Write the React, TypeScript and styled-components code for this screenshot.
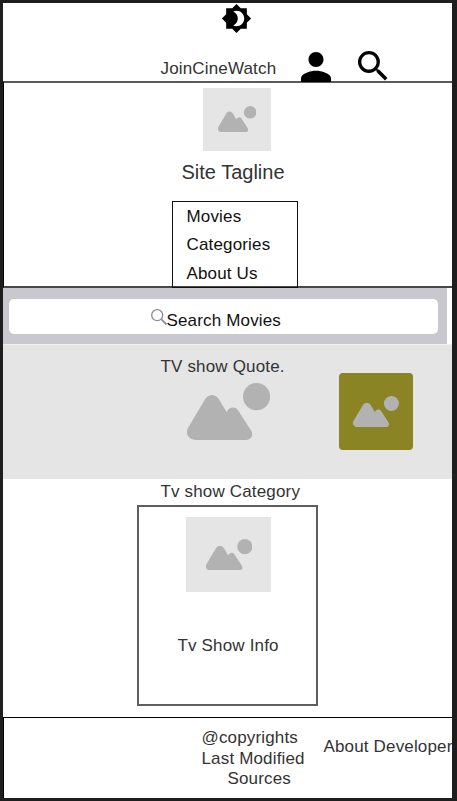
import React from "react";
import styled, { createGlobalStyle } from "styled-components";
import { MdBrightness4 } from "react-icons/md";

const GlobalStyle = createGlobalStyle`
  * { box-sizing: border-box; }
  body { margin: 0; background: #1e1e1e; }
`;

const Page = styled.div`
  width: 457px;
  height: 801px;
  padding: 3px 5px 3px 3px;
  background: #1e1e1e;
  font-family: "Liberation Sans", Arial, sans-serif;
  overflow: hidden;
`;

const Screen = styled.div`
  display: flex;
  flex-direction: column;
  width: 449px;
  height: 795px;
  background: #fff;
  overflow: hidden;
`;

const Text = styled.span<{ $tracking?: number; $size?: number; $color?: string }>`
  display: block;
  font-size: ${(p) => p.$size ?? 17}px;
  line-height: 20px;
  letter-spacing: ${(p) => p.$tracking ?? 0.16}px;
  text-indent: 0.5px;
  color: ${(p) => p.$color ?? "#333"};
  white-space: nowrap;
`;

const Header = styled.header`
  display: flex;
  flex-direction: column;
  flex: none;
  height: 78px;
`;

const ThemeToggle = styled.div`
  display: flex;
  flex: none;
  height: 31px;
  padding-left: 217.5px;
  color: #000;
`;

const HeaderRow = styled.div`
  display: flex;
  flex: none;
  align-items: flex-start;
  padding: 17px 0 0 157px;
`;

const Brand = styled(Text)`
  width: 141px;
  margin-top: 8px;
`;

const PersonIcon = styled.svg`
  flex: none;
  width: 30px;
  height: 30px;
  margin: 1px 27px 0 0;
  z-index: 1;
`;

const SearchIcon = styled.svg`
  flex: none;
  width: 29.5px;
  height: 29.5px;
`;

const Hero = styled.section`
  display: flex;
  flex-direction: column;
  align-items: flex-start;
  flex: none;
  height: 207px;
  border-top: 2px solid #5a5a5a;
  border-bottom: 2px solid #484848;
  border-left: 1px solid #000;
`;

const ImageBox = styled.div<{ $width: number; $height: number }>`
  display: flex;
  flex: none;
  width: ${(p) => p.$width}px;
  height: ${(p) => p.$height}px;
  background: #e5e5e5;
`;

const HeroImage = styled(ImageBox)`
  margin: 5px 0 0 198.5px;
  padding: 18px 0 0 15px;
`;

const Tagline = styled(Text)`
  margin: 11px 0 0 177px;
`;

const Menu = styled.nav`
  display: flex;
  flex-direction: column;
  flex: none;
  gap: 8.5px;
  width: 126px;
  height: 87px;
  margin: 19px 0 0 168px;
  padding: 5px 0 0 13px;
  border: 1px solid #111;
`;

const SearchBand = styled.div`
  flex: none;
  width: 444px;
  height: 56px;
  padding: 11px 9px 0 6px;
  background: #c9c8ce;
`;

const SearchField = styled.div`
  display: flex;
  height: 35px;
  padding: 10px 0 0 142px;
  border-radius: 5px;
  background: #fff;
`;

const FieldIcon = styled.svg`
  flex: none;
  width: 16px;
  height: 16px;
  margin-right: -1px;
`;

const FieldText = styled(Text)`
  margin-top: 2px;
`;

const Quote = styled.section`
  display: flex;
  flex: none;
  height: 135px;
  background: #e5e5e5;
  border-top: 1px solid #efefef;
`;

const QuoteMain = styled.div`
  width: 336px;
  padding: 12px 0 0 157px;
`;

const QuotePicture = styled.div`
  padding: 6px 0 0 26.5px;
`;

const OliveCard = styled.div`
  width: 74px;
  height: 77px;
  margin-top: 28px;
  padding: 23px 0 0 14px;
  border-radius: 4px;
  background: #8a8425;
`;

const Category = styled.section`
  flex: none;
  height: 238px;
  padding-top: 3px;
`;

const CategoryTitle = styled(Text)`
  margin-left: 157px;
`;

const ShowCard = styled.article`
  width: 181px;
  height: 201px;
  margin: 3px 0 0 134px;
  border: 2px solid #5e5e5e;
`;

const ShowImage = styled(ImageBox)`
  margin: 10px 0 0 47px;
  padding: 21.5px 0 0 19.5px;
`;

const ShowInfo = styled(Text)`
  margin: 44px 0 0 38px;
`;

const Footer = styled.footer`
  display: flex;
  flex: 1;
  border: 1px solid #000;
  border-right: 0;
  border-bottom: 0;
`;

const Credits = styled.div`
  flex: none;
  width: 319px;
  padding: 10px 0 0 197px;
`;

const CreditLine = styled(Text)<{ $indent?: number }>`
  height: 20.5px;
  padding-left: ${(p) => p.$indent ?? 0}px;
`;

const Developer = styled(Text)`
  margin-top: 19px;
`;

const Landscape = styled.svg<{ $width: number }>`
  display: block;
  width: ${(p) => p.$width}px;
  height: ${(p) => (p.$width * 57) / 83.3}px;
  fill: #b2b2b2;
`;

function Picture({ width }: { width: number }) {
  return (
    <Landscape $width={width} viewBox="0 0 83.3 57">
      <path d="M9 57C1.5 57-2 50.5 1 45L17 18C20.5 10 29.5 10 33 18L39.6 29C42.5 23.5 48.5 23 51.5 28L64 47.5C67 52 64 57 58.5 57Z" />
      <circle cx="69.6" cy="13.7" r="13.6" />
    </Landscape>
  );
}

export default function App() {
  return (
    <>
      <GlobalStyle />
      <Page>
        <Screen>
          <Header>
            <ThemeToggle>
              <MdBrightness4 size={31} />
            </ThemeToggle>
            <HeaderRow>
              <Brand>JoinCineWatch</Brand>
              <PersonIcon viewBox="4 4 16 16">
                <path d="M12 12c2.21 0 4-1.79 4-4s-1.79-4-4-4-4 1.79-4 4 1.79 4 4 4zm0 2c-2.67 0-8 1.34-8 4v2h16v-2c0-2.66-5.33-4-8-4z" />
              </PersonIcon>
              <SearchIcon viewBox="3 3 17.49 17.49">
                <path d="M15.5 14h-.79l-.28-.27A6.471 6.471 0 0 0 16 9.5 6.5 6.5 0 1 0 9.5 16c1.61 0 3.09-.59 4.23-1.57l.27.28v.79l5 4.99L20.49 19l-4.99-5zm-6 0C7.01 14 5 11.99 5 9.5S7.01 5 9.5 5 14 7.01 14 9.5 11.99 14 9.5 14z" />
              </SearchIcon>
            </HeaderRow>
          </Header>
          <Hero>
            <HeroImage $width={68.5} $height={62.5}>
              <Picture width={38.5} />
            </HeroImage>
            <Tagline $size={20} $tracking={0}>Site Tagline</Tagline>
            <Menu>
              <Text $color="#111">Movies</Text>
              <Text $color="#111">Categories</Text>
              <Text $color="#111">About Us</Text>
            </Menu>
          </Hero>
          <SearchBand>
            <SearchField>
              <FieldIcon viewBox="0 0 16 16" fill="none" stroke="#8e8e93" strokeWidth="1.3">
                <circle cx="6.2" cy="6.2" r="5.5" />
                <path d="M10.2 10.2L15.5 15.5" strokeWidth="1.8" />
              </FieldIcon>
              <FieldText $color="#111">Search Movies</FieldText>
            </SearchField>
          </SearchBand>
          <Quote>
            <QuoteMain>
              <Text>TV show Quote.</Text>
              <QuotePicture>
                <Picture width={83.3} />
              </QuotePicture>
            </QuoteMain>
            <OliveCard>
              <Picture width={46} />
            </OliveCard>
          </Quote>
          <Category>
            <CategoryTitle>Tv show Category</CategoryTitle>
            <ShowCard>
              <ShowImage $width={85} $height={75}>
                <Picture width={46.5} />
              </ShowImage>
              <ShowInfo>Tv Show Info</ShowInfo>
            </ShowCard>
          </Category>
          <Footer>
            <Credits>
              <CreditLine>@copyrights</CreditLine>
              <CreditLine>Last Modified</CreditLine>
              <CreditLine $indent={26}>Sources</CreditLine>
            </Credits>
            <Developer>About Developer</Developer>
          </Footer>
        </Screen>
      </Page>
    </>
  );
}
